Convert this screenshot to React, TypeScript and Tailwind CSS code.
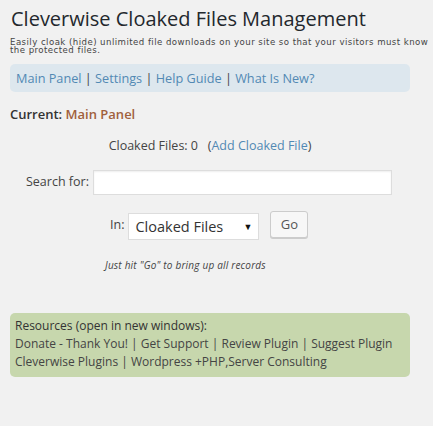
import React from "react";

export default function App() {
  return (
    <div className="min-h-[426px] bg-[#f1f1f1] pl-[10px] pt-[4px] text-[#444]" style={{ fontFamily: '"Open Sans", sans-serif' }}>
      <h2 className="text-[20px] leading-[30px] text-[#23282d] pl-[1px]">Cleverwise Cloaked Files Management</h2>
      <div className="text-[8.6px] leading-[8px] tracking-[0.45px] text-[#444] mt-[4px]" style={{ fontFamily: '"DejaVu Sans", Verdana, sans-serif' }}>
        Easily cloak (hide) unlimited file downloads on your site so that your visitors must know the protected files.
      </div>
      <div className="mt-[10px] w-[400px] h-[28px] rounded-[5px] bg-[#dde7ee] pl-[6px] text-[12.7px] leading-[28px] text-[#5289b4]">
        Main Panel <span className="text-[#444]">|</span> Settings <span className="text-[#444]">|</span> Help Guide <span className="text-[#444]">|</span> What Is New?
      </div>
      <div className="mt-[12px] text-[13px] leading-[20px] font-semibold text-[#333]">
        Current: <span className="text-[#a0603c]">Main Panel</span>
      </div>
      <div className="mt-[12px] w-[400px] text-center text-[12.5px] leading-[20px]">
        Cloaked Files: 0&nbsp;&nbsp; (<span className="text-[#5289b4]">Add Cloaked File</span>)
      </div>
      <div className="mt-[14px] flex items-center">
        <span className="ml-[16px] text-[12.5px]">Search for:</span>
        <div className="ml-[4px] w-[299px] h-[25px] bg-white border border-[#dddddd] shadow-[inset_0_1px_2px_rgba(0,0,0,0.07)]" />
      </div>
      <div className="mt-[16px] flex items-start">
        <span className="ml-[100px] mt-[5px] text-[12.5px]">In:</span>
        <div className="ml-[4px] mt-[2px] w-[131px] h-[27px] bg-white border border-[#dddddd] flex items-center justify-between pl-[6px] pr-[6px] text-[14.5px] text-[#333]">
          <span>Cloaked Files</span>
          <span className="text-[9px] text-[#111]">▼</span>
        </div>
        <div className="ml-[11px] w-[38px] h-[27px] bg-[#f7f7f7] border border-[#cccccc] rounded-[3px] shadow-[0_1px_0_#ccc] flex items-center justify-center text-[13px] text-[#555]">
          Go
        </div>
      </div>
      <div className="mt-[18px] ml-[95px] text-[10px] leading-[14px] italic tracking-[0.2px] text-[#444]">Just hit "Go" to bring up all records</div>
      <div className="mt-[41px] w-[400px] rounded-[5px] bg-[#c7d7ad] px-[5px] pt-[4px] pb-[6px] text-[12px] leading-[18px] text-[#333]">
        <div>Resources (open in new windows):</div>
        <div className="text-[#444]">Donate - Thank You! | Get Support | Review Plugin | Suggest Plugin</div>
        <div className="text-[#444]">Cleverwise Plugins | Wordpress +PHP,Server Consulting</div>
      </div>
    </div>
  );
}
